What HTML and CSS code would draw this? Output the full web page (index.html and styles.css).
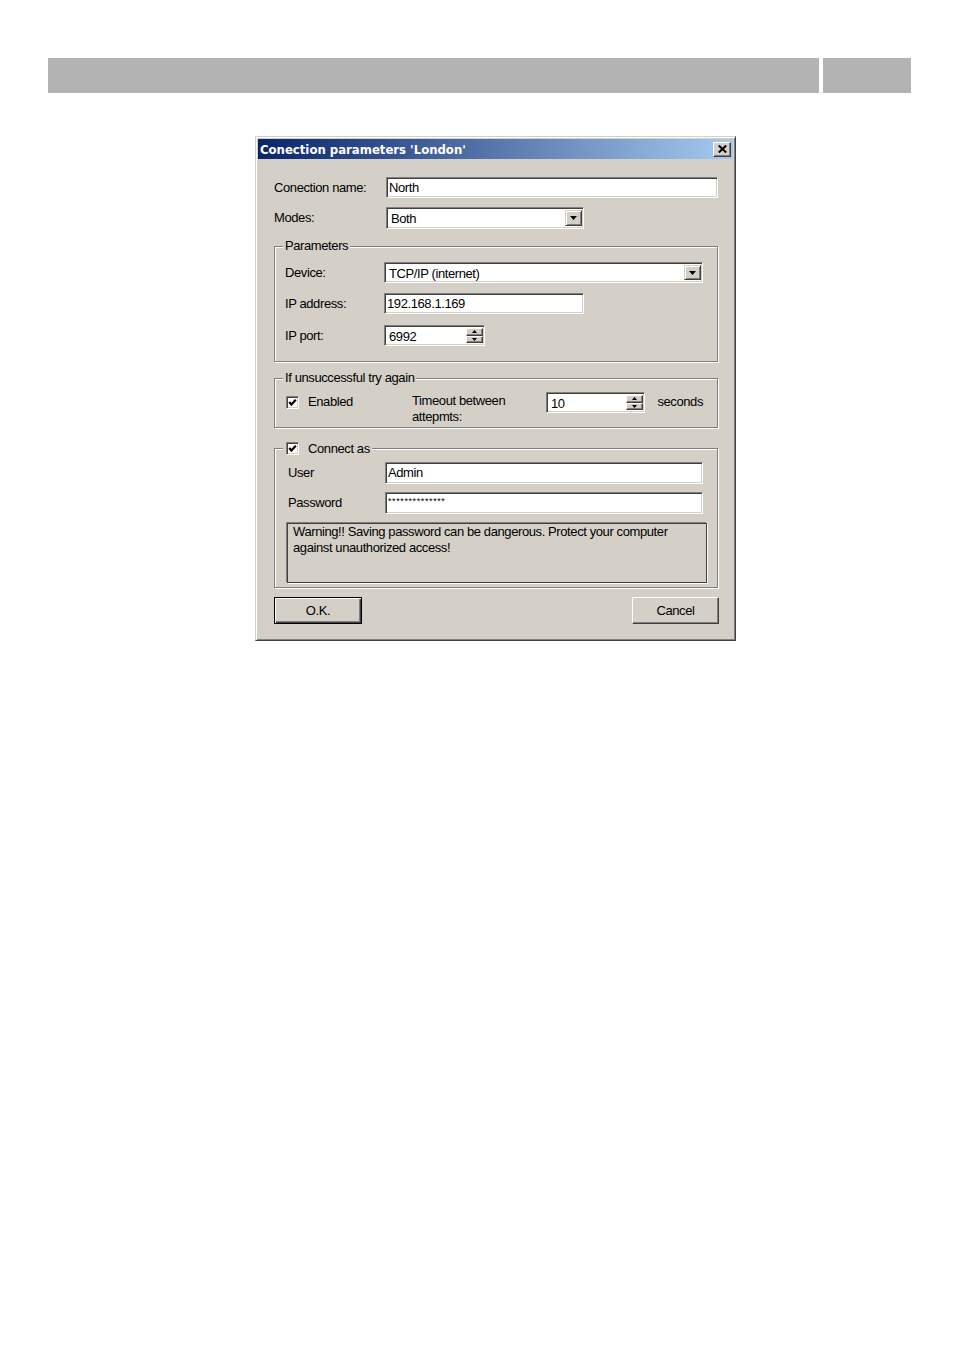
FILE: index.html
```html
<!DOCTYPE html>
<html>
<head>
<meta charset="utf-8">
<title>Conection parameters</title>
<link rel="stylesheet" href="styles.css">
</head>
<body>
<div class="page-header"><div class="hdr-main"></div><div class="hdr-side"></div></div>

<div class="dialog">
  <div class="titlebar">
    <span class="title">Conection parameters 'London'</span>
    <span class="close-btn"><svg width="9" height="8" viewBox="0 0 9 8"><path d="M0.8 0.5 L8.2 7.5 M8.2 0.5 L0.8 7.5" stroke="#000" stroke-width="2" fill="none"/></svg></span>
  </div>
  <div class="dlg-body">
    <div class="row r-name">
      <span class="lbl w-top">Conection name:</span>
      <div class="edit w-name">North</div>
    </div>
    <div class="row r-modes">
      <span class="lbl w-top">Modes:</span>
      <div class="combo w-modes"><span class="combo-text">Both</span><span class="drop-btn"><svg width="7" height="4" viewBox="0 0 7 4"><polygon points="0,0 7,0 3.5,4" fill="#000"/></svg></span></div>
    </div>

    <fieldset class="group g-params">
      <legend>Parameters</legend>
      <div class="row gr-row">
        <span class="lbl w-grp">Device:</span>
        <div class="combo w-device"><span class="combo-text">TCP/IP (internet)</span><span class="drop-btn"><svg width="7" height="4" viewBox="0 0 7 4"><polygon points="0,0 7,0 3.5,4" fill="#000"/></svg></span></div>
      </div>
      <div class="row gr-row r-ip">
        <span class="lbl w-grp">IP address:</span>
        <div class="edit w-ip">192.168.1.169</div>
      </div>
      <div class="row gr-row r-port">
        <span class="lbl w-grp">IP port:</span>
        <div class="spin w-port"><span class="spin-text">6992</span><span class="spin-btns"><span class="spin-btn"><svg width="5" height="3" viewBox="0 0 5 3"><polygon points="0,3 5,3 2.5,0" fill="#000"/></svg></span><span class="spin-btn"><svg width="5" height="3" viewBox="0 0 5 3"><polygon points="0,0 5,0 2.5,3" fill="#000"/></svg></span></span></div>
      </div>
    </fieldset>

    <fieldset class="group g-retry">
      <legend>If unsuccessful try again</legend>
      <div class="retry-row">
        <div class="check-item">
          <span class="checkbox"><svg width="9" height="9" viewBox="0 0 9 9"><polyline points="1.2,4 3.4,6.5 7.8,1.8" stroke="#000" stroke-width="2.2" fill="none"/></svg></span>
          <span class="check-label">Enabled</span>
        </div>
        <div class="timeout-text">Timeout between<br>attepmts:</div>
        <div class="spin w-timeout"><span class="spin-text">10</span><span class="spin-btns"><span class="spin-btn"><svg width="5" height="3" viewBox="0 0 5 3"><polygon points="0,3 5,3 2.5,0" fill="#000"/></svg></span><span class="spin-btn"><svg width="5" height="3" viewBox="0 0 5 3"><polygon points="0,0 5,0 2.5,3" fill="#000"/></svg></span></span></div>
        <div class="seconds">seconds</div>
      </div>
    </fieldset>

    <fieldset class="group g-connect">
      <legend><span class="legend-check"><span class="checkbox"><svg width="9" height="9" viewBox="0 0 9 9"><polyline points="1.2,4 3.4,6.5 7.8,1.8" stroke="#000" stroke-width="2.2" fill="none"/></svg></span><span class="check-label">Connect as</span></span></legend>
      <div class="row cn-row">
        <span class="lbl w-cn">User</span>
        <div class="edit w-user">Admin</div>
      </div>
      <div class="row cn-row r-pass">
        <span class="lbl w-cn">Password</span>
        <div class="edit w-user pass">**************</div>
      </div>
      <div class="warning">Warning!! Saving password can be dangerous. Protect your computer against unauthorized access!</div>
    </fieldset>

    <div class="buttons">
      <button class="btn btn-ok">O.K.</button>
      <button class="btn btn-cancel">Cancel</button>
    </div>
  </div>
</div>
</body>
</html>
```

FILE: styles.css
```css
html, body {
  margin: 0;
  padding: 0;
  background: #fff;
}
body {
  font-family: "Liberation Sans", Arial, sans-serif;
  font-size: 13px;
  color: #000;
}

.page-header {
  display: flex;
  gap: 4px;
  margin: 58px 0 0 48px;
  height: 35px;
}
.hdr-main { width: 771px; background: #b3b3b3; }
.hdr-side { width: 88px; background: #b3b3b3; }

.dialog {
  box-sizing: border-box;
  width: 481px;
  margin: 43px 0 0 255px;
  background: #d4d0c8;
  border: 1px solid;
  border-color: #d4d0c8 #404040 #404040 #d4d0c8;
  padding: 2px;
  box-shadow: inset 1px 1px 0 #fff, inset -1px -1px 0 #808080;
  letter-spacing: -0.4px;
}

.titlebar {
  height: 20px;
  display: flex;
  align-items: center;
  justify-content: space-between;
  padding: 0 2px;
  background: linear-gradient(to right, #0a246a, #a6caf0);
}
.title {
  font-family: "DejaVu Sans", Verdana, sans-serif;
  font-weight: bold;
  font-size: 11.7px;
  letter-spacing: 0;
  color: #fff;
  padding-top: 1px;
}
.close-btn {
  box-sizing: border-box;
  width: 18px;
  height: 15px;
  display: flex;
  align-items: center;
  justify-content: center;
  background: #d4d0c8;
  border: 1px solid;
  border-color: #fff #404040 #404040 #fff;
  box-shadow: inset -1px -1px 0 #808080;
}

.dlg-body {
  padding: 18px 15px 14px 16px;
}

.row {
  display: flex;
  align-items: center;
}
.lbl {
  flex: none;
  line-height: 16px;
  white-space: nowrap;
}
.w-top { width: 112px; }
.w-grp { width: 99px; }
.w-cn { width: 97px; padding-left: 3px; }

.r-modes { margin-top: 9px; }

.edit, .combo, .spin {
  box-sizing: border-box;
  height: 21px;
  background: #fff;
  border: 1px solid;
  border-color: #808080 #fff #fff #808080;
  box-shadow: inset 1px 1px 0 #404040, inset -1px -1px 0 #d4d0c8;
  white-space: nowrap;
  overflow: hidden;
}
.edit {
  padding: 0 2px;
  line-height: 19px;
}
.combo, .spin {
  display: flex;
  align-items: stretch;
  padding: 2px 1px 2px 2px;
}
.combo-text, .spin-text {
  flex: 1;
  padding-left: 2px;
  line-height: 17px;
}
.drop-btn {
  box-sizing: border-box;
  width: 17px;
  flex: none;
  display: flex;
  align-items: center;
  justify-content: center;
  background: #d4d0c8;
  border: 1px solid;
  border-color: #d4d0c8 #404040 #404040 #d4d0c8;
  box-shadow: inset 1px 1px 0 #fff, inset -1px -1px 0 #808080;
}
.spin-btns {
  flex: none;
  width: 17px;
  display: flex;
  flex-direction: column;
}
.spin-btn {
  flex: 1;
  box-sizing: border-box;
  display: flex;
  align-items: center;
  justify-content: center;
  background: #d4d0c8;
  border: 1px solid;
  border-color: #fff #404040 #404040 #fff;
  box-shadow: inset -1px -1px 0 #808080;
}

.w-name { width: 332px; }
.w-modes { width: 198px; height: 22px; }
.w-device { width: 319px; }
.w-ip { width: 200px; }
.w-port { width: 101px; }
.w-timeout { width: 100px; }
.w-user { width: 318px; height: 22px; line-height: 20px; }

.group {
  margin: 0;
  min-width: 0;
  border: 1px solid #808080;
  box-shadow: 1px 1px 0 #fff, inset 1px 1px 0 #fff;
}
.group legend {
  padding: 0 2px;
  margin-left: -2px;
  line-height: 14px;
  background: #d4d0c8;
}

.g-params {
  margin-top: 10px;
  padding: 9px 14px 15px 10px;
}
.gr-row { height: 21px; }
.r-ip { margin-top: 10px; }
.r-port { margin-top: 11px; }

.g-retry {
  margin-top: 9px;
  padding: 7px 14px 2px 10px;
}
.retry-row {
  display: flex;
  align-items: flex-start;
}
.check-item {
  width: 126px;
  flex: none;
  display: flex;
  align-items: center;
  padding-top: 2px;
}
.checkbox {
  box-sizing: border-box;
  width: 13px;
  height: 13px;
  flex: none;
  margin-left: 1px;
  display: flex;
  align-items: center;
  justify-content: center;
  background: #fff;
  border: 1px solid;
  border-color: #808080 #fff #fff #808080;
  box-shadow: inset 1px 1px 0 #404040, inset -1px -1px 0 #d4d0c8;
}
.check-label {
  margin-left: 9px;
  line-height: 16px;
}
.timeout-text {
  width: 135px;
  flex: none;
  line-height: 16px;
  margin-top: 1px;
  padding-left: 1px;
  box-sizing: border-box;
}
.seconds {
  margin-left: 12px;
  line-height: 16px;
  margin-top: 2px;
}

.g-connect {
  margin-top: 13px;
  padding: 7px 14px 4px 10px;
}
.legend-check {
  display: flex;
  align-items: center;
  height: 14px;
}
.legend-check .check-label {
  padding-top: 2px;
}
.cn-row { height: 22px; }
.r-pass { margin-top: 8px; }
.pass {
  font-size: 9px;
  letter-spacing: 0.6px;
  line-height: 14px;
  padding-top: 1px;
}
.warning {
  box-sizing: border-box;
  height: 60px;
  margin: 9px -4px 0 2px;
  padding: 0 4px 0 5px;
  border: 1px solid #404040;
  box-shadow: -1px -1px 0 #808080, 1px 1px 0 #fff;
  line-height: 16px;
}

.buttons {
  display: flex;
  justify-content: space-between;
  margin-top: 9px;
  margin-right: -1px;
}
.btn {
  box-sizing: border-box;
  height: 27px;
  padding: 0;
  font: inherit;
  letter-spacing: inherit;
  color: #000;
  background: #d4d0c8;
  border: 1px solid;
  border-color: #fff #404040 #404040 #fff;
  box-shadow: inset -1px -1px 0 #808080;
}
.btn-ok {
  width: 88px;
  border: 1px solid #000;
  box-shadow: inset 1px 1px 0 #fff, inset -1px -1px 0 #404040, inset -2px -2px 0 #808080;
}
.btn-cancel { width: 87px; }
```
